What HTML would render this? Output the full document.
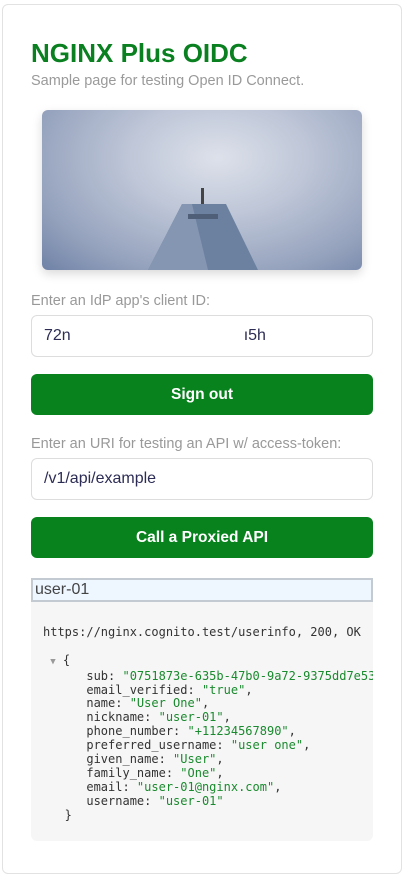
<!DOCTYPE html>
<html><head><meta charset="utf-8"><style>
*{margin:0;padding:0;box-sizing:border-box}
body{width:406px;height:878px;background:#fff;font-family:"Liberation Sans",sans-serif;position:relative;overflow:hidden}
.card{position:absolute;left:2px;top:4px;width:400px;height:870px;border:1px solid #e2e2e2;border-radius:6px}
.a{position:absolute}
h1{position:absolute;left:31px;top:38px;font-size:26px;font-weight:bold;color:#0a8020}
.sub{left:31px;top:73px;font-size:14.5px;color:#9a9a9a}
.img{left:42px;top:110px;width:320px;height:160px;border-radius:6px;overflow:hidden;box-shadow:0 4px 10px rgba(0,0,0,.15);background:radial-gradient(ellipse at 55% 30%,#dde1ea 0%,#bfc7d8 35%,#95a2bd 75%,#6f82a6 100%)}
.lbl{left:31px;font-size:14.5px;color:#999}
.inp{left:31px;width:342px;height:42px;border:1px solid #ddd;border-radius:6px;font-size:16px;color:#2c2c55;padding:11px 12px}
.btn{left:31px;width:342px;height:41px;background:#07821d;border-radius:6px;color:#fff;font-size:15.5px;font-weight:bold;text-align:center;line-height:41px}
.u{left:31px;top:578px;width:342px;height:24px;background:#eef6ff;border:2px solid #c4cad2;font-size:16px;color:#444;padding:0 2px;line-height:20px}
.pre{left:31px;top:602px;width:342px;height:239px;background:#f6f6f6;border-radius:0 0 6px 6px;overflow:hidden;font-family:"DejaVu Sans Mono","Liberation Mono",monospace;font-size:12px;color:#333;white-space:pre;line-height:13.9px;padding:10px 0 0 12px}
.g{color:#1a8a2e}
</style></head><body>
<div class="card"></div>
<h1>NGINX Plus OIDC</h1>
<div class="a sub">Sample page for testing Open ID Connect.</div>
<div class="a img"><svg width="320" height="160" viewBox="0 0 320 160"><polygon points="106,160 140,94 184,94 216,160" fill="#6b819f"/><polygon points="140,94 150,94 166,160 106,160" fill="#8496b2"/><rect x="159" y="78" width="3" height="16" fill="#444"/><rect x="146" y="104" width="30" height="5" fill="#4f5f78"/></svg></div>
<div class="a lbl" style="top:293px">Enter an IdP app's client ID:</div>
<div class="a inp" style="top:315px">72n<span style="margin-left:173px">ı5h</span></div>
<div class="a btn" style="top:374px">Sign out</div>
<div class="a lbl" style="top:436px">Enter an URI for testing an API w/ access-token:</div>
<div class="a inp" style="top:458px">/v1/api/example</div>
<div class="a btn" style="top:517px">Call a Proxied API</div>
<div class="a u">user-01</div>
<div class="a pre">
https://nginx.cognito.test/userinfo, 200, OK

 <span style="color:#999;font-size:9px">▼</span> {
      sub: <span class="g">"0751873e-635b-47b0-9a72-9375dd7e53</span>
      email_verified: <span class="g">"true"</span>,
      name: <span class="g">"User One"</span>,
      nickname: <span class="g">"user-01"</span>,
      phone_number: <span class="g">"+11234567890"</span>,
      preferred_username: <span class="g">"user one"</span>,
      given_name: <span class="g">"User"</span>,
      family_name: <span class="g">"One"</span>,
      email: <span class="g">"user-01@nginx.com"</span>,
      username: <span class="g">"user-01"</span>
   }</div>
</body></html>
